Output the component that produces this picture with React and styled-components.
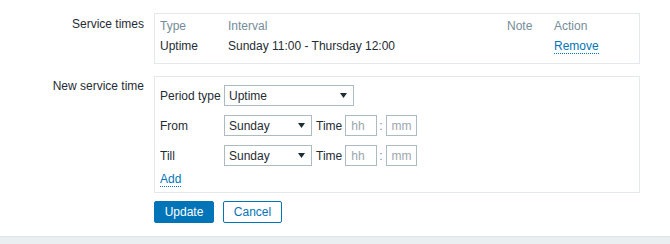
import React from 'react';
import styled, { createGlobalStyle } from 'styled-components';

const GlobalStyle = createGlobalStyle`
  html, body {
    margin: 0;
    padding: 0;
    background: #ffffff;
    overflow: hidden;
  }
  body {
    font-family: "Liberation Sans", Arial, sans-serif;
    font-size: 12px;
    line-height: 14px;
    color: #1f2c33;
  }
`;

const Page = styled.div`
  display: flex;
  flex-direction: column;
  width: 670px;
  height: 244px;
`;

const Form = styled.div`
  display: grid;
  grid-template-columns: 144px 486px;
  column-gap: 10px;
  row-gap: 12px;
  padding-top: 13px;
  flex: 1;
  align-content: start;
`;

const FieldLabel = styled.div`
  text-align: right;
  padding-top: ${(p) => p.$top || 4}px;
  white-space: nowrap;
`;

const Box = styled.div`
  border: 1px solid #e5e8ea;
  padding: ${(p) => p.$pad};
`;

const TimesTable = styled.div`
  display: grid;
  grid-template-columns: 68px 279px 47px auto;
  row-gap: 6px;
`;

const HeadCell = styled.div`
  color: #768d99;
`;

const Cell = styled.div`
  white-space: nowrap;
`;

const Link = styled.a`
  color: #0275b8;
  text-decoration: none;
  border-bottom: 1px dotted #0275b8;
  cursor: pointer;
  justify-self: start;
`;

const EditGrid = styled.div`
  display: grid;
  grid-template-columns: 64px auto;
  row-gap: 9px;
  align-items: center;
`;

const Controls = styled.div`
  display: flex;
  align-items: center;
`;

const SelectBox = styled.div`
  box-sizing: border-box;
  display: flex;
  align-items: center;
  justify-content: space-between;
  width: ${(p) => p.$width}px;
  height: 21px;
  padding: 0 6px 0 4px;
  border: 1px solid #acbbc2;
  background: #ffffff;
`;

const Arrow = () => (
  <svg width="7" height="5" viewBox="0 0 7 5">
    <path d="M0 0h7L3.5 5z" fill="#1f2c33" />
  </svg>
);

const TimeLabel = styled.span`
  margin: 0 3px 0 4px;
`;

const TimeInput = styled.div`
  box-sizing: border-box;
  width: ${(p) => p.$width}px;
  height: 21px;
  padding: 0 5px;
  border: 1px solid #acbbc2;
  color: #9aa7ae;
  display: flex;
  align-items: center;
`;

const Colon = styled.span`
  margin: 0 3px 0 2px;
  color: #768d99;
`;

const AddRow = styled.div`
  grid-column: 1 / 3;
  margin-top: -3px;
`;

const Buttons = styled.div`
  grid-column: 2;
  display: flex;
  gap: 9px;
  margin-top: -4px;
`;

const Button = styled.button`
  box-sizing: border-box;
  height: 22px;
  width: ${(p) => p.$width}px;
  padding: 0;
  font-family: inherit;
  font-size: 12px;
  border: 1px solid #0275b8;
  border-radius: 2px;
  background: ${(p) => (p.$primary ? '#0275b8' : '#ffffff')};
  color: ${(p) => (p.$primary ? '#ffffff' : '#0275b8')};
`;

const Footer = styled.div`
  height: 7px;
  background: #ebeef0;
  border-top: 1px solid #e0e5e8;
`;

function Select({ value, width }) {
  return (
    <SelectBox $width={width}>
      <span>{value}</span>
      <Arrow />
    </SelectBox>
  );
}

function TimeFields({ day }) {
  return (
    <Controls>
      <Select value={day} width={88} />
      <TimeLabel>Time</TimeLabel>
      <TimeInput $width={32}>hh</TimeInput>
      <Colon>:</Colon>
      <TimeInput $width={31}>mm</TimeInput>
    </Controls>
  );
}

export default function App() {
  return (
    <Page>
      <GlobalStyle />
      <Form>
        <FieldLabel $top={4}>Service times</FieldLabel>
        <Box $pad="5px 5px 9px">
          <TimesTable>
            <HeadCell>Type</HeadCell>
            <HeadCell>Interval</HeadCell>
            <HeadCell>Note</HeadCell>
            <HeadCell>Action</HeadCell>
            <Cell>Uptime</Cell>
            <Cell>Sunday 11:00 - Thursday 12:00</Cell>
            <Cell></Cell>
            <Link>Remove</Link>
          </TimesTable>
        </Box>

        <FieldLabel $top={3}>New service time</FieldLabel>
        <Box $pad="8px 5px 6px">
          <EditGrid>
            <span>Period type</span>
            <Controls>
              <Select value="Uptime" width={130} />
            </Controls>
            <span>From</span>
            <TimeFields day="Sunday" />
            <span>Till</span>
            <TimeFields day="Sunday" />
            <AddRow>
              <Link>Add</Link>
            </AddRow>
          </EditGrid>
        </Box>

        <Buttons>
          <Button $primary $width={60}>Update</Button>
          <Button $width={59}>Cancel</Button>
        </Buttons>
      </Form>
      <Footer />
    </Page>
  );
}
